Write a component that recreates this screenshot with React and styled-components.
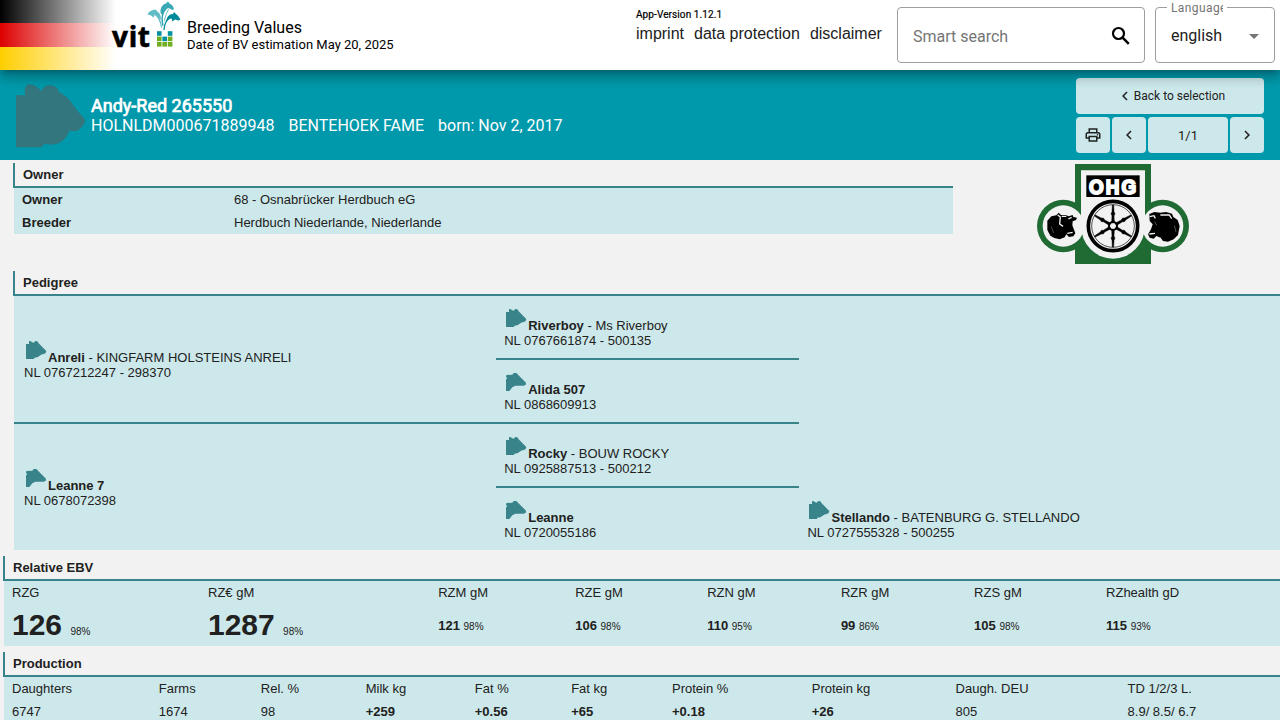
import React from "react";
import styled, { createGlobalStyle } from "styled-components";
import {
  MdArrowDropDown,
  MdNavigateBefore,
  MdNavigateNext,
  MdOutlinePrint,
} from "react-icons/md";

const teal = "#0099ab";
const line = "#38848a";
const pale = "#cde8ea";

const GlobalStyle = createGlobalStyle`
  * { box-sizing: border-box; }
  body {
    margin: 0;
    background: #f2f2f2;
    color: #212121;
    font: 13px/15px "Liberation Sans", Arial, sans-serif;
    overflow: hidden;
  }
`;

const Page = styled.div`
  width: 1280px;
  height: 720px;
  overflow: hidden;
`;

/* ---------- top bar ---------- */

const TopBar = styled.header`
  position: relative;
  display: flex;
  height: 70px;
  background: #fff;
  color: #000;
  font-family: Roboto, sans-serif;
  box-shadow: 0 5px 5px -3px rgba(0, 0, 0, 0.2), 0 8px 10px 1px rgba(0, 0, 0, 0.14),
    0 3px 14px 2px rgba(0, 0, 0, 0.12);

  > * {
    flex-shrink: 0;
  }
`;

const Brand = styled.div`
  width: 187px;
  padding-left: 110px;
  background: linear-gradient(to right, rgba(255, 255, 255, 0), #fff 116px),
    linear-gradient(#000 0 23.3px, #d00 23.3px 46.6px, #ffce00 46.6px);
`;

const AppTitle = styled.div`
  width: 449px;
  padding-top: 18px;
  font-size: 16px;
  line-height: 19px;
`;

const AppSubtitle = styled.div`
  font-size: 13px;
  line-height: 15px;
`;

const MetaBlock = styled.div`
  width: 261px;
  padding-top: 9px;
`;

const Version = styled.div`
  font-size: 10px;
  line-height: 12px;
  letter-spacing: 0.1px;
  -webkit-text-stroke: 0.2px #000;
`;

const Links = styled.nav`
  display: flex;
  gap: 10px;
  padding-top: 3px;
  font: 16px/19px "Liberation Sans", Arial, sans-serif;
  color: #212121;
`;

const Field = styled.div`
  position: relative;
  display: flex;
  align-items: center;
  justify-content: space-between;
  width: ${(p) => p.$width}px;
  height: 56px;
  margin: 7px 10px 0 0;
  padding: 1px ${(p) => p.$end}px 0 15px;
  border: 1px solid #9e9e9e;
  border-radius: 4px;
  font-size: 16px;
  color: #212121;
`;

const Placeholder = styled.span`
  padding-top: 2px;
  color: #757575;
`;

const FieldLabel = styled.span`
  position: absolute;
  top: -7px;
  left: 11px;
  width: 60px;
  padding-left: 4px;
  height: 14px;
  background: #fff;
  color: #757575;
  font-size: 12px;
  line-height: 14px;

  span {
    display: block;
    width: 52px;
    overflow: hidden;
    letter-spacing: 0.4px;
  }
`;

/* ---------- animal bar ---------- */

const AnimalBar = styled.section`
  display: flex;
  height: 90px;
  padding: 8px 16px 0;
  background: ${teal};
  color: #fff;
  font-family: Roboto, sans-serif;
`;

const Portrait = styled.div`
  padding-top: 6px;
`;

const Animal = styled.div`
  flex: 1;
  padding: 18px 0 0 5px;
`;

const AnimalName = styled.div`
  font-size: 18px;
  font-weight: 400;
  line-height: 20px;
  -webkit-text-stroke: 0.7px #fff;
`;

const AnimalFacts = styled.div`
  display: flex;
  gap: 14.1px;
  font-size: 16px;
  line-height: 19px;
`;

const Controls = styled.div`
  display: grid;
  grid-template-columns: 34px 34px 80px 34px;
  grid-auto-rows: 36px;
  gap: 3px 2px;
`;

const Button = styled.button`
  display: flex;
  align-items: center;
  justify-content: center;
  grid-column: span ${(p) => p.$span || 1};
  padding: 0;
  border: 0;
  border-radius: 4px;
  background: ${pale};
  color: #212121;
  font: ${(p) => p.$size || 12}px Roboto, sans-serif;
`;

const BackButton = styled(Button)`
  padding-left: 1px;

  svg {
    margin: 0 -0.5px 0 0.5px;
  }
`;

/* ---------- content ---------- */

const Section = styled.section`
  width: ${(p) => p.$width || "auto"};
  margin-left: ${(p) => p.$left}px;
  padding-top: ${(p) => p.$top}px;
`;

const SectionTitle = styled.h2`
  height: 25px;
  margin: 0 0 0 -1px;
  padding: 4px 0 0 8px;
  border-left: 2px solid ${line};
  border-bottom: 2px solid ${line};
  font-size: 13px;
  line-height: 15px;
`;

const OwnerArea = styled.div`
  display: flex;
  height: 108px;
`;

const OwnerRow = styled.div`
  display: grid;
  grid-template-columns: 212px 1fr;
  height: 23px;
  padding: 4px 8px;
  background: ${pale};
`;

const LogoBox = styled.div`
  padding: 4px 0 0 84px;
`;

const Tree = styled.div`
  display: grid;
  grid-template-columns: 482.2px 303.3px 1fr;
  grid-template-rows: 64px 64px 64px 62px;
  background: ${pale};
`;

const Ancestor = styled.div`
  display: flex;
  flex-direction: column;
  justify-content: center;
  grid-column: ${(p) => p.$col};
  grid-row: ${(p) => p.$row};
  padding-left: ${(p) => (p.$col === 1 ? 10 : 8)}px;
  border-bottom: ${(p) => (p.$last ? "0" : `2px solid ${line}`)};
`;

const AncestorName = styled.div`
  display: flex;
  height: 27px;
  align-items: flex-end;
  white-space: pre;

  svg {
    align-self: flex-start;
  }
`;

const Figures = styled.div`
  display: grid;
  grid-template-columns: ${(p) => p.$cols};
  grid-template-rows: 23px ${(p) => p.$valueHeight}px;
  background: ${pale};
`;

const Label = styled.div`
  padding: 4px 8px;
  white-space: nowrap;
`;

const Value = styled.div`
  grid-row: 2;
  align-self: center;
  padding: ${(p) => (p.$big ? 7 : p.$raised ? 1 : 0)}px 0 0 8px;
  font-size: ${(p) => (p.$big ? 30 : 13)}px;
  line-height: ${(p) => (p.$big ? 34 : 15)}px;
  font-weight: ${(p) => (p.$plain ? 400 : 700)};
  white-space: nowrap;

  small {
    font-size: 10px;
    font-weight: 400;
  }
`;

/* ---------- drawings ---------- */

const VitLogo = () => (
  <svg width="74" height="50" viewBox="110 0 74 50">
    <text x="112" y="46.8" fontFamily="Open Sans" fontWeight="700" fontSize="28" letterSpacing="0.7" stroke="#000" strokeWidth="0.6">vit</text>
    {[0, 1, 2].map((r) =>
      [0, 1, 2].map((c) =>
        r === 0 && c === 1 ? null : (
          <rect
            key={`${r}${c}`}
            x={157 + c * 5.4}
            y={31.2 + r * 5.4}
            width="4.6"
            height="4.6"
            fill={r === 0 || (r === 1 && c === 1) ? "#0090a0" : "#6fae1e"}
          />
        )
      )
    )}
    <g fill="none" strokeLinecap="round">
      <path d="M161.500 27C160.500 21 158.500 16.500 154.500 13.500" stroke="#63bcc6" strokeWidth="1.300" />
      <path d="M162.800 25C161.200 18 162.500 12 166.500 8" stroke="#2fa5b2" strokeWidth="1.500" />
      <path d="M164 29.500C164.500 23 167 19 171 17" stroke="#008b9b" strokeWidth="1.300" />
      <path d="M164.300 21Q165.500 14 168.500 9.500" stroke="#63bcc6" strokeWidth="0.900" />
    </g>
    <path d="M147.500 14.500Q148.500 11 153 10L155.500 9.500L158 12Q161 14 161 20Q157.500 16 154.500 15L153.500 17.500L151 15.500Z" fill="#63bcc6" />
    <path d="M160.500 10Q161.500 4.500 166 3.500L168 1.500L169.500 3.500Q173 5 174 9L172.500 10L168.500 8Q164 9 162.500 15Q160 14 160.500 10Z" fill="#38a9b5" />
    <path d="M167 18Q169 14 173 14L174 12L176 14Q179 16 180.500 19.500L178.500 20.500L175 19.500L172.500 21.500L171.500 18.500Q168.500 18.500 165.500 23Z" fill="#008b9b" />
  </svg>
);

const SearchIcon = () => (
  <svg width="24" height="24" viewBox="0 0 24 24" fill="none" stroke="#000">
    <circle cx="9.500" cy="9.500" r="5.500" strokeWidth="2.200" />
    <path d="M13.600 13.600L19.800 19.800" strokeWidth="2.400" />
  </svg>
);

const BullHead = () => (
  <svg width="70" height="64" viewBox="48 26 210 192">
    <path
      fill="#33767d"
      d="M48 60H77C71 50 74 29 85 27C100 26 117 37 124 48C130 34 140 29 152 30C167 31 175 40 177 51C198 60 211 76 221 91L240 116C249 125 256 130 255 139C251 152 239 163 229 167H208C202 183 189 201 165 207C150 210 139 206 132 206C131 214 124 216 118 216H48Z"
    />
  </svg>
);

const SmallHead = ({ cow }) => (
  <svg width="24" height="24" viewBox="72 24 72 72" fill={line}>
    {cow ? (
      <path d="M79 39L97 38L101 33H109L117 41L138 62L137 69L130 71H106L97 76L88 87H78V52L82 49L78 45Z" />
    ) : (
      <path d="M78 42H87V34L91 33L97 37L101 38L106 33L112 34L116 40L139 63L137 69L130 73H126L112 82L103 83L102 87H78Z" />
    )}
  </svg>
);

const OhgLogo = () => (
  <svg width="152" height="100" viewBox="51 27 456 300">
    <g fill="#1f6b33">
      <rect x="165" y="27" width="228" height="300" />
      <circle cx="130" cy="213" r="79" />
      <circle cx="428" cy="213" r="79" />
    </g>
    <g fill="#f2f2f2">
      <path d="M183 46H375V213A96 98 0 0 1 183 213Z" />
      <circle cx="130" cy="213" r="62" />
      <circle cx="428" cy="213" r="62" />
    </g>
    <rect x="199" y="61" width="160" height="65" fill="#000" />
    <text transform="translate(207 116) scale(0.9 1)" fontFamily="Liberation Sans" fontWeight="700" fontSize="63" fill="#fff" stroke="#fff" strokeWidth="6" letterSpacing="7">OHG</text>
    <g fill="none" stroke="#000">
      <circle cx="279" cy="213" r="74" strokeWidth="11" />
      <circle cx="279" cy="213" r="64" strokeWidth="2" />
      <circle cx="279" cy="213" r="12" strokeWidth="6" />
      {[0, 60, 120, 180, 240, 300].map((a) => (
        <path key={a} transform={`rotate(${a} 279 213)`} fill="#000" strokeWidth="1.500" d="M275 203L276 182L273 177L276 170L277 150H281L282 170L285 177L282 182L283 203Z" />
      ))}
    </g>
    <path d="M82 197L94 184L109 181L116 173L123 180L137 180L146 184L158 180L160 186L171 188L168 195L158 199L157 211L166 235L160 244L147 246L139 238L134 247L119 253L103 249L91 242L82 225Z" />
    <path d="M388 177L403 171L421 173L438 171L456 176L460 186L473 195L479 213L474 240L461 253L444 260L429 258L422 248L409 243L401 251L389 248L384 238L393 223L398 208L389 198Z" />
    <g fill="none" stroke="#f2f2f2" strokeWidth="4">
      <path d="M113 180L121 186L119 207L129 214M125 184L139 184M145 192L155 187M142 235L158 232" />
      <path d="M389 185L402 182L406 190M421 180L448 180L455 191M388 237L405 235" />
      <path strokeWidth="1" d="M94 215L101 234M404 199L410 211M463 211L468 231" />
    </g>
  </svg>
);

/* ---------- data ---------- */

const ancestors = [
  { col: 1, row: "1 / 3", name: "Anreli", extra: " - KINGFARM HOLSTEINS ANRELI", id: "NL 0767212247 - 298370" },
  { col: 1, row: "3 / 5", name: "Leanne 7", id: "NL 0678072398", cow: true, last: true },
  { col: 2, row: "1", name: "Riverboy", extra: " - Ms Riverboy", id: "NL 0767661874 - 500135" },
  { col: 2, row: "2", name: "Alida 507", id: "NL 0868609913", cow: true },
  { col: 2, row: "3", name: "Rocky", extra: " - BOUW ROCKY", id: "NL 0925887513 - 500212" },
  { col: 2, row: "4", name: "Leanne", id: "NL 0720055186", cow: true, last: true },
  { col: 3, row: "4", name: "Stellando", extra: " - BATENBURG G. STELLANDO", id: "NL 0727555328 - 500255", last: true },
];

const ebv = [
  ["RZG", "126", "98%"],
  ["RZ€ gM", "1287", "98%"],
  ["RZM gM", "121", "98%"],
  ["RZE gM", "106", "98%"],
  ["RZN gM", "110", "95%"],
  ["RZR gM", "99", "86%"],
  ["RZS gM", "105", "98%"],
  ["RZhealth gD", "115", "93%"],
];

const production = [
  ["Daughters", "6747", true],
  ["Farms", "1674", true],
  ["Rel. %", "98", true],
  ["Milk kg", "+259"],
  ["Fat %", "+0.56"],
  ["Fat kg", "+65"],
  ["Protein %", "+0.18"],
  ["Protein kg", "+26"],
  ["Daugh. DEU", "805", true],
  ["TD 1/2/3 L.", "8.9/ 8.5/ 6.7", true],
];

const columnStyle = (i) => ({ gridColumn: i + 1 });

export default function App() {
  return (
    <Page>
      <GlobalStyle />
      <TopBar>
        <Brand>
          <VitLogo />
        </Brand>
        <AppTitle>
          Breeding Values
          <AppSubtitle>Date of BV estimation May 20, 2025</AppSubtitle>
        </AppTitle>
        <MetaBlock>
          <Version>App-Version 1.12.1</Version>
          <Links>
            <span>imprint</span>
            <span>data protection</span>
            <span>disclaimer</span>
          </Links>
        </MetaBlock>
        <Field $width={248} $end={11}>
          <Placeholder>Smart search</Placeholder>
          <SearchIcon />
        </Field>
        <Field $width={120} $end={8}>
          <FieldLabel>
            <span>Language</span>
          </FieldLabel>
          english
          <MdArrowDropDown size={24} color="#757575" />
        </Field>
      </TopBar>

      <AnimalBar>
        <Portrait>
          <BullHead />
        </Portrait>
        <Animal>
          <AnimalName>Andy-Red 265550</AnimalName>
          <AnimalFacts>
            <span>HOLNLDM000671889948</span>
            <span>BENTEHOEK FAME</span>
            <span>born: Nov 2, 2017</span>
          </AnimalFacts>
        </Animal>
        <Controls>
          <BackButton $span={4}>
            <MdNavigateBefore size={18} />
            Back to selection
          </BackButton>
          <Button>
            <MdOutlinePrint size={18} />
          </Button>
          <Button>
            <MdNavigateBefore size={18} />
          </Button>
          <Button $size={13}>1/1</Button>
          <Button>
            <MdNavigateNext size={18} />
          </Button>
        </Controls>
      </AnimalBar>

      <OwnerArea>
        <Section $left={14} $top={3} $width="939px">
          <SectionTitle>Owner</SectionTitle>
          <OwnerRow>
            <b>Owner</b>
            <span>68 - Osnabrücker Herdbuch eG</span>
          </OwnerRow>
          <OwnerRow>
            <b>Breeder</b>
            <span>Herdbuch Niederlande, Niederlande</span>
          </OwnerRow>
        </Section>
        <LogoBox>
          <OhgLogo />
        </LogoBox>
      </OwnerArea>

      <Section $left={14} $top={3}>
        <SectionTitle>Pedigree</SectionTitle>
        <Tree>
          {ancestors.map((a) => (
            <Ancestor key={a.name} $col={a.col} $row={a.row} $last={a.last}>
              <AncestorName>
                <SmallHead cow={a.cow} />
                <b>{a.name}</b>
                {a.extra}
              </AncestorName>
              <div>{a.id}</div>
            </Ancestor>
          ))}
        </Tree>
      </Section>

      <Section $left={4} $top={6}>
        <SectionTitle>Relative EBV</SectionTitle>
        <Figures $cols="196px 230.2px 137px 132px 133.7px 133.2px 132px 1fr" $valueHeight={42}>
          {ebv.map(([label, value, rel], i) => (
            <React.Fragment key={label}>
              <Label style={columnStyle(i)}>{label}</Label>
              <Value $big={i < 2} $raised style={columnStyle(i)}>
                {value} <small>{rel}</small>
              </Value>
            </React.Fragment>
          ))}
        </Figures>
      </Section>

      <Section $left={4} $top={6}>
        <SectionTitle>Production</SectionTitle>
        <Figures $cols="146.8px 102px 104.9px 109.1px 96.4px 100.8px 139.8px 143.8px 172px 1fr" $valueHeight={23}>
          {production.map(([label, value, plain], i) => (
            <React.Fragment key={label}>
              <Label style={columnStyle(i)}>{label}</Label>
              <Value $plain={plain} style={columnStyle(i)}>
                {value}
              </Value>
            </React.Fragment>
          ))}
        </Figures>
      </Section>
    </Page>
  );
}
